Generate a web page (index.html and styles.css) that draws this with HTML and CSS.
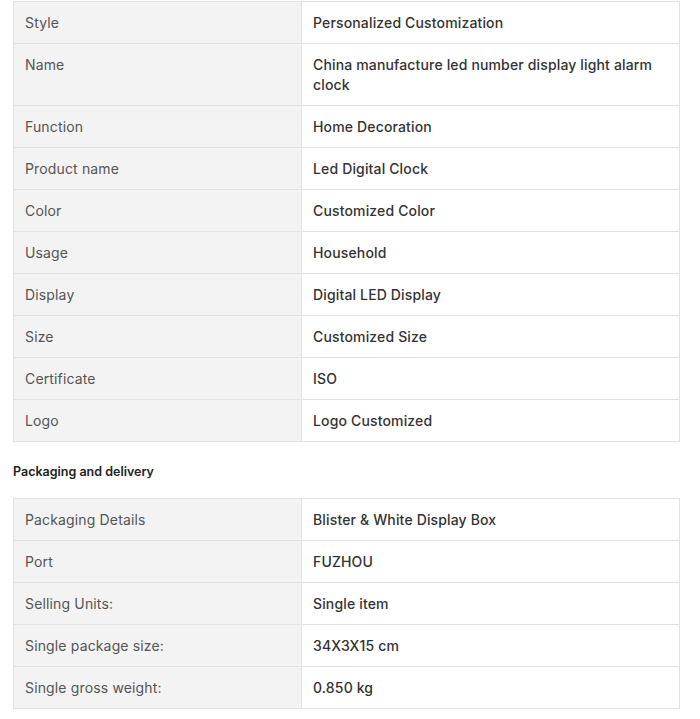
FILE: index.html
```html
<!DOCTYPE html>
<html>
<head>
<meta charset="utf-8">
<link rel="stylesheet" href="styles.css">
</head>
<body>
<div class="page">
  <table class="spec">
    <colgroup><col class="c-label"><col></colgroup>
    <tr><td class="label">Style</td><td class="value">Personalized Customization</td></tr>
    <tr><td class="label">Name</td><td class="value">China manufacture led number display light alarm clock</td></tr>
    <tr><td class="label">Function</td><td class="value">Home Decoration</td></tr>
    <tr><td class="label">Product name</td><td class="value">Led Digital Clock</td></tr>
    <tr><td class="label">Color</td><td class="value">Customized Color</td></tr>
    <tr><td class="label">Usage</td><td class="value">Household</td></tr>
    <tr><td class="label">Display</td><td class="value">Digital LED Display</td></tr>
    <tr><td class="label">Size</td><td class="value">Customized Size</td></tr>
    <tr><td class="label">Certificate</td><td class="value">ISO</td></tr>
    <tr><td class="label">Logo</td><td class="value">Logo Customized</td></tr>
  </table>
  <h3 class="section-title">Packaging and delivery</h3>
  <table class="spec">
    <colgroup><col class="c-label"><col></colgroup>
    <tr><td class="label">Packaging Details</td><td class="value">Blister &amp; White Display Box</td></tr>
    <tr><td class="label">Port</td><td class="value">FUZHOU</td></tr>
    <tr><td class="label">Selling Units:</td><td class="value">Single item</td></tr>
    <tr><td class="label">Single package size:</td><td class="value">34X3X15 cm</td></tr>
    <tr><td class="label">Single gross weight:</td><td class="value">0.850 kg</td></tr>
  </table>
</div>
</body>
</html>
```
FILE: styles.css
```css
html, body {
  margin: 0;
  padding: 0;
  background: #ffffff;
}
.page {
  padding: 1px 20px 0 13px;
  font-family: Inter, "Noto Sans", "Liberation Sans", sans-serif;
}
.spec {
  width: 667px;
  border-collapse: collapse;
  table-layout: fixed;
  font-size: 14px;
  line-height: 20px;
  letter-spacing: 0.15px;
}
.c-label {
  width: 288px;
}
.spec td {
  border: 1px solid #e2e2e2;
  padding: 11px 12px 10px 11px;
  vertical-align: top;
}
.label {
  background: #f3f3f3;
  color: #555555;
}
.value {
  background: #ffffff;
  color: #333333;
  font-weight: 500;
}
.section-title {
  margin: 22px 0 18px 0;
  font-size: 12.5px;
  line-height: 16px;
  font-weight: 600;
  color: #222222;
}
```
